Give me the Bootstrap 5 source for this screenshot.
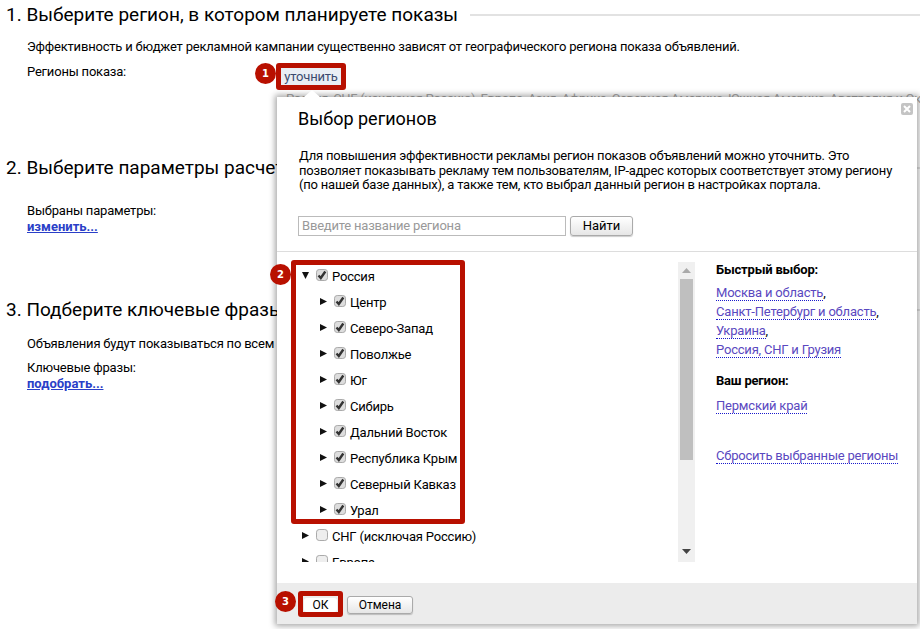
<!DOCTYPE html>
<html lang="ru">
<head>
  <meta charset="UTF-8">
  <title>Выбор регионов</title>
  <link href="https://cdn.jsdelivr.net/npm/bootstrap@5.3.0/dist/css/bootstrap.min.css" rel="stylesheet">
  <style>
    html, body { height: 629px; overflow: hidden; }
    body { background: #fff; color: #000; font-family: Roboto, "Noto Sans", sans-serif; font-size: 13px; line-height: 15px; letter-spacing: -.2px; position: relative; }
    .step { padding-left: 6px; }
    .step-head { font-size: 19px; line-height: 24px; font-weight: 400; letter-spacing: 0; margin: 0; }
    .step-rule { flex: 1; height: 2px; background: #e2e2e2; margin-left: 12px; }
    .step-body { padding-left: 21px; }
    .step-1 { padding-top: 3px; height: 156px; }
    .step-2 { height: 142px; }
    .step-link { display: inline-block; margin-top: 1px; color: #2a3fc8; font-weight: 700; letter-spacing: 0; }
    .region-intro { margin: 12px 0 0; }
    .region-label { margin: 10px 0 0; }
    .region-line { color: #aaa; white-space: nowrap; overflow: hidden; padding-left: 259px; margin-top: 12px; letter-spacing: -.3px; }
    .params { margin-top: 23px; }
    .keys-intro { margin: 14px 0 0; }
    .keys-label { margin-top: 9px; }

    .region-pop { position: absolute; left: 277px; top: 97px; width: 640px; height: 527px; background: #fff; box-shadow: 0 0 6px 2px rgba(0,0,0,.35); z-index: 2; }
    .region-pop::before { content: ""; position: absolute; left: 27px; top: -7px; border: 8px solid transparent; border-top: 0; border-bottom: 7px solid #fff; }
    .pop-close { position: absolute; right: 4px; top: 6px; width: 12px; height: 12px; background: #c4c4c4; border-radius: 2px; }
    .pop-head { padding: 0 22px; height: 155px; border-bottom: 1px solid #ddd; }
    .pop-title { font-size: 18px; line-height: 24px; font-weight: 400; letter-spacing: 0; margin: 0 0 0 -1px; padding-top: 10px; }
    .pop-text { margin: 18px 0 0; width: 600px; line-height: 14.5px; }
    .pop-search { margin: 23px 0 0 -1px; }
    .pop-input { width: 268px; height: 20px; border: 1px solid #bbb; border-radius: 0; padding: 0 3px; font-size: 13px; line-height: 18px; letter-spacing: -.2px; }
    .pop-input::placeholder { color: #999; }
    .pop-btn { font-size: 13px; line-height: 16px; letter-spacing: 0; color: #000; padding: 0; border: 1px solid #aaa; border-radius: 3px; background: linear-gradient(#fff, #e6e6e6); box-shadow: 0 1px 1px rgba(0,0,0,.2); }
    .pop-find { width: 63px; height: 20px; }
    .pop-main { height: 331px; }
    .tree-wrap { width: 418px; height: 300px; margin-top: 10px; }
    .tree-list { flex: 1; height: 300px; overflow: hidden; padding: 2px 0 0 25px; }
    .tree-row { height: 26px; line-height: 26px; white-space: nowrap; }
    .tree-sub { padding-left: 18px; }
    .tree-arrow { width: 7px; height: 7px; margin: 0 7px 4px 0; flex: none; }
    .tree-check { width: 12px; height: 12px; margin: 0 4px 4px 0; flex: none; border: 1px solid #aaa; border-radius: 2px; background-color: #eee; }
    .tree-check:checked { background-color: #ddd; border-color: #aaa; background-image: url("data:image/svg+xml,%3csvg xmlns='http://www.w3.org/2000/svg' viewBox='0 0 12 12'%3e%3cpath fill='none' stroke='%23333' stroke-width='2.4' d='M2.5 6.5l2.3 2.5 4.5-6.5'/%3e%3c/svg%3e"); background-size: 12px 12px; }
    .tree-scroll { width: 17px; height: 300px; background: #f0f0f0; }
    .scroll-thumb { height: 181px; width: 13px; margin: 0 auto; background: #bfbfbf; }
    .scroll-up { height: 17px; }
    .quick { margin-left: 21px; padding-top: 10px; }
    .quick-head { font-weight: 700; line-height: 16px; margin: 0 0 5px; }
    .quick-head-own { margin: 14px 0 7px; }
    .quick-item { line-height: 19px; }
    .quick-reset { margin-top: 31px; }
    .quick-link { color: #5a48c0; text-decoration: none; border-bottom: 1px dotted #1a1acc; }
    .pop-foot { height: 41px; background: #ececec; padding: 13px 0 0 27px; }
    .pop-ok { width: 33px; height: 14px; margin-top: 2px; font-size: 12px; line-height: 14px; background: #fff; border: 0; box-shadow: none; }
    .pop-cancel { width: 66px; height: 18px; font-size: 12px; margin-left: 10px; }

    .mark-box { position: absolute; border: 5px solid #b81000; border-radius: 3px; z-index: 3; pointer-events: none; }
    .mark-num { position: absolute; width: 21px; height: 21px; border-radius: 50%; background: #b81000; color: #fff; font-family: "DejaVu Sans", sans-serif; font-weight: 700; font-size: 10px; line-height: 21px; letter-spacing: 0; text-align: center; z-index: 3; }
    .mark-refine { position: absolute; left: 281px; top: 68px; width: 60px; text-align: center; height: 17px; line-height: 17px; background: #e9eef4; color: #3b4a6e; z-index: 3; }
  </style>
</head>
<body>

<section class="step step-1">
  <div class="d-flex align-items-center">
    <h2 class="step-head">1. Выберите регион, в котором планируете показы</h2>
    <div class="step-rule"></div>
  </div>
  <div class="step-body">
    <p class="region-intro">Эффективность и бюджет рекламной кампании существенно зависят от географического региона показа объявлений.</p>
    <p class="region-label">Регионы показа:</p>
    <div class="region-line">Россия, СНГ (исключая Россию), Европа, Азия, Африка, Северная Америка, Южная Америка, Австралия и Океания</div>
  </div>
</section>

<section class="step step-2">
  <div class="d-flex align-items-center">
    <h2 class="step-head">2. Выберите параметры расчета</h2>
    <div class="step-rule"></div>
  </div>
  <div class="step-body params">
    <div>Выбраны параметры:</div>
    <a class="step-link" href="#">изменить...</a>
  </div>
</section>

<section class="step">
  <div class="d-flex align-items-center">
    <h2 class="step-head">3. Подберите ключевые фразы</h2>
    <div class="step-rule"></div>
  </div>
  <div class="step-body">
    <p class="keys-intro">Объявления будут показываться по всем запросам</p>
    <div class="keys-label">Ключевые фразы:</div>
    <a class="step-link" href="#">подобрать...</a>
  </div>
</section>

<div class="region-pop">
  <div class="pop-close d-flex align-items-center justify-content-center">
    <svg width="8" height="8" viewBox="0 0 8 8"><path d="M1 1l6 6M7 1L1 7" stroke="#fff" stroke-width="2"/></svg>
  </div>
  <div class="pop-head">
    <h3 class="pop-title">Выбор регионов</h3>
    <p class="pop-text">Для повышения эффективности рекламы регион показов объявлений можно уточнить. Это позволяет показывать рекламу тем пользователям, IP-адрес которых соответствует этому региону (по нашей базе данных), а также тем, кто выбрал данный регион в настройках портала.</p>
    <div class="pop-search d-flex gap-1 align-items-center">
      <input class="form-control pop-input" placeholder="Введите название региона">
      <button class="btn pop-btn pop-find">Найти</button>
    </div>
  </div>
  <div class="pop-main d-flex">
    <div class="tree-wrap d-flex">
      <ul class="tree-list list-unstyled mb-0" id="regionTree"></ul>
      <div class="tree-scroll d-flex flex-column">
        <div class="scroll-up d-flex align-items-center justify-content-center">
          <svg width="9" height="5" viewBox="0 0 9 5"><path d="M4.5 0L9 5H0z" fill="#aaa"/></svg>
        </div>
        <div class="scroll-thumb"></div>
        <div class="flex-grow-1 d-flex align-items-end justify-content-center pb-2">
          <svg width="9" height="5" viewBox="0 0 9 5"><path d="M0 0h9L4.5 5z" fill="#444"/></svg>
        </div>
      </div>
    </div>
    <div class="quick">
      <p class="quick-head">Быстрый выбор:</p>
      <div class="quick-item"><a class="quick-link" href="#">Москва и область</a>,</div>
      <div class="quick-item"><a class="quick-link" href="#">Санкт-Петербург и область</a>,</div>
      <div class="quick-item"><a class="quick-link" href="#">Украина</a>,</div>
      <div class="quick-item"><a class="quick-link" href="#">Россия, СНГ и Грузия</a></div>
      <p class="quick-head quick-head-own">Ваш регион:</p>
      <div class="quick-item"><a class="quick-link" href="#">Пермский край</a></div>
      <div class="quick-item quick-reset"><a class="quick-link" href="#">Сбросить выбранные регионы</a></div>
    </div>
  </div>
  <div class="pop-foot d-flex align-items-start">
    <button class="btn pop-btn pop-ok">ОК</button>
    <button class="btn pop-btn pop-cancel">Отмена</button>
  </div>
</div>

<a class="mark-refine text-decoration-none" href="#">уточнить</a>
<div class="mark-box" style="left:276px;top:63px;width:70px;height:27px"></div>
<div class="mark-box" style="left:291px;top:260px;width:174px;height:264px"></div>
<div class="mark-box" style="left:298px;top:591px;width:45px;height:26px"></div>
<div class="mark-num" style="left:255px;top:63px">1</div>
<div class="mark-num" style="left:270px;top:264px">2</div>
<div class="mark-num" style="left:275px;top:591px">3</div>

<script>
  const tree = [
    ["Россия", 0, true, true],
    ["Центр", 1, true], ["Северо-Запад", 1, true], ["Поволжье", 1, true], ["Юг", 1, true],
    ["Сибирь", 1, true], ["Дальний Восток", 1, true], ["Республика Крым", 1, true],
    ["Северный Кавказ", 1, true], ["Урал", 1, true],
    ["СНГ (исключая Россию)", 0, false], ["Европа", 0, false]
  ];
  const right = '<path d="M0 0l7 3.5L0 7z" fill="#111"/>';
  const down = '<path d="M0 0h7L3.5 7z" fill="#111"/>';
  document.getElementById("regionTree").innerHTML = tree.map(([name, level, on, open]) => `
    <li class="tree-row d-flex align-items-center ${level ? "tree-sub" : ""}">
      <svg class="tree-arrow" viewBox="0 0 7 7">${open ? down : right}</svg>
      <input class="form-check-input tree-check" type="checkbox" ${on ? "checked" : ""}>
      <span>${name}</span>
    </li>`).join("");
</script>

</body>
</html>
